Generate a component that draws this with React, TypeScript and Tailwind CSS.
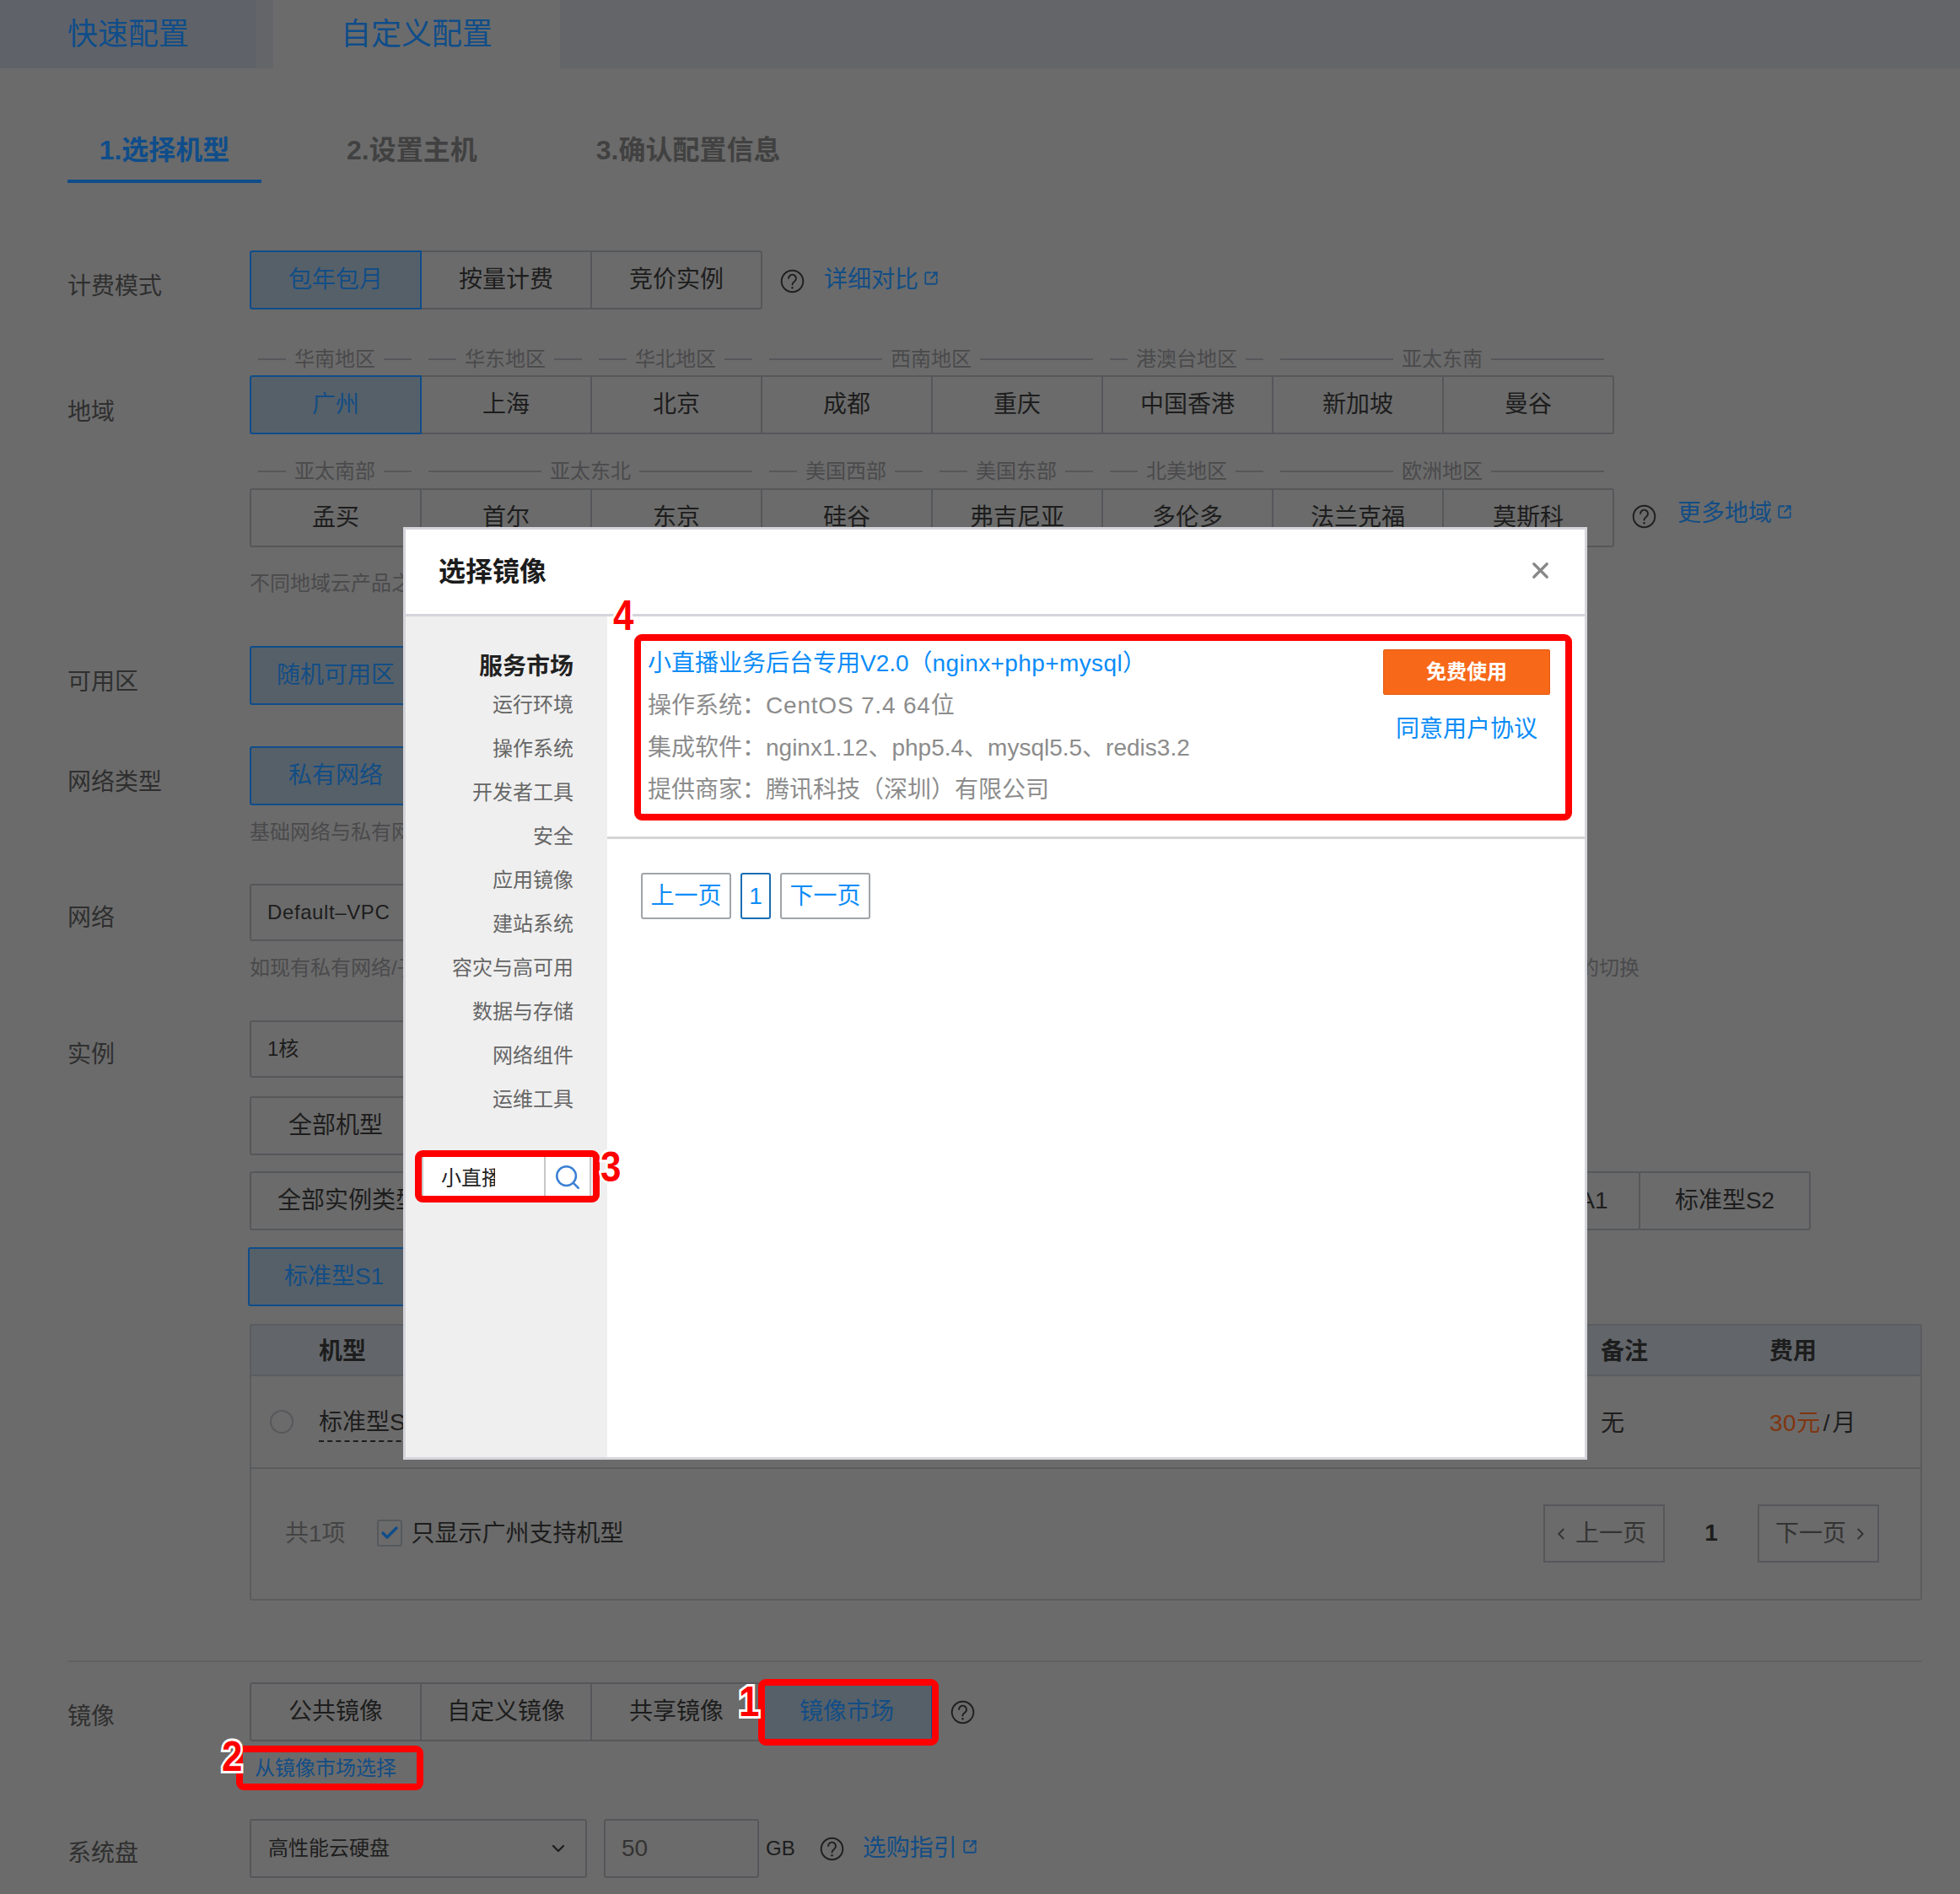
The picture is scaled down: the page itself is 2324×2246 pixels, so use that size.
import { Check, ChevronDown, ChevronLeft, ChevronRight, Search, SquareArrowOutUpRight, X } from 'lucide-react'

const cellBase = 'w-[204px] h-[70px] -ml-[2px] first:ml-0 flex items-center justify-center border-2 text-[28px] leading-none first:rounded-l-[3px] last:rounded-r-[3px]'

const BtnGroup = ({ items, active, cellClass = '' }: { items: string[], active?: string, cellClass?: string }) => (
  <div className="flex">
    {items.map((item) => (
      <div
        key={item}
        className={`${cellBase} ${cellClass} ${item === active ? 'relative z-10 bg-[#566069] border-[#0f4d8a] text-[#124d85]' : 'border-[#56575a] text-[#1d1d1d]'}`}
      >
        {item}
      </div>
    ))}
  </div>
)

const Label = ({ text, top = 23 }: { text: string, top?: number }) => (
  <div className={`w-[216px] shrink-0 text-[28px] leading-[40px] text-[#2f2f2f] ${top === 55 ? 'mt-[55px]' : top === 21 ? 'mt-[21px]' : 'mt-[23px]'}`}>{text}</div>
)

const Help = ({ className = '' }: { className?: string }) => (
  <svg viewBox="0 0 24 24" fill="none" stroke="currentColor" strokeWidth="1.6" strokeLinecap="round" className={`w-[29px] h-[29px] text-[#1f1f1f] shrink-0 ${className}`}>
    <circle cx="12" cy="12" r="10.6" />
    <path d="M8.3 9.2a3.7 3.7 0 1 1 5.9 3c-1.3.9-2.2 1.6-2.2 3.1" />
    <path d="M12 18.4v.1" strokeWidth="2" />
  </svg>
)

const ExtLink = ({ text }: { text: string }) => (
  <span className="flex items-center text-[28px] leading-[40px] text-[#124d85]">
    {text}
    <SquareArrowOutUpRight size={18} strokeWidth={2.4} className="ml-[6px] -mt-[4px]" />
  </span>
)

const regionHead = (groups: [string, number][]) => (
  <div className="grid grid-cols-8 w-[1616px] h-[24px]">
    {groups.map(([name, span]) => (
      <div key={name} className={`flex items-center gap-[10px] px-[10px] text-[24px] leading-none text-[#4a4a4c] ${span === 2 ? 'col-span-2' : ''}`}>
        <i className="flex-1 h-[2px] bg-[#56575a]" />
        {name}
        <i className="flex-1 h-[2px] bg-[#56575a]" />
      </div>
    ))}
  </div>
)

// red marker on top of the screenshot
const Mark = ({ className }: { className: string }) => (
  <div className={`absolute z-30 border-[8px] border-[#ff0000] rounded-[9px] ${className}`} />
)

const Num = ({ n, className }: { n: string, className: string }) => (
  <div className={`absolute z-40 origin-left scale-x-[0.88] font-bold text-[50px] leading-none text-[#ff0000] [-webkit-text-stroke:6px_white] [paint-order:stroke_fill] ${className}`}>{n}</div>
)

const sideItems = ['运行环境', '操作系统', '开发者工具', '安全', '应用镜像', '建站系统', '容灾与高可用', '数据与存储', '网络组件', '运维工具']

const ImageModal = () => (
  <div className="absolute z-20 left-[478px] top-[625px] w-[1404px] h-[1106px] bg-white border-[3px] border-[#d5d5dc] flex flex-col">
    <div className="h-[103px] shrink-0 border-b-[3px] border-[#d5d5dc] flex items-center justify-between pl-[39px] pr-[37px]">
      <span className="text-[32px] font-bold leading-none text-[#1c1c1c] -mt-[1px]">选择镜像</span>
      <X size={31} strokeWidth={2.5} className="text-[#888888] -mt-[3px]" />
    </div>
    <div className="flex flex-1 min-h-0">
      <div className="w-[239px] shrink-0 bg-[#efefef] pt-[41px] flex flex-col items-end">
        <div className="pr-[40px] text-[28px] font-bold leading-[38px] text-[#222222]">服务市场</div>
        {sideItems.map((s) => (
          <div key={s} className="pr-[40px] text-[24px] leading-[52px] text-[#666666]">{s}</div>
        ))}
        <div className="mt-[40px] mr-[19px] w-[201px] h-[51px] bg-white border-2 border-[#c8c8c8] flex">
          <div className="w-[145px] pl-[21px] pt-[2px] flex items-center border-r-2 border-[#c8c8c8]">
            <span className="w-[64px] overflow-hidden whitespace-nowrap text-[24px] leading-none text-[#222222]">小直播</span>
          </div>
          <div className="flex-1 flex items-center justify-center">
            <Search size={34} strokeWidth={1.8} className="text-[#3d80d4]" />
          </div>
        </div>
      </div>
      <div className="flex-1 min-w-0">
        <div className="h-[264px] border-b-[3px] border-[#d5d5d5] pl-[48px] pr-[41px] pt-[31px] flex justify-between">
          <div className="text-[28px] leading-[50px] text-[#8c8c8c]">
            <div className="text-[#0a8cf8]">小直播业务后台专用V2.0（<span className="tracking-[0.4px]">nginx+php+mysql</span>）</div>
            <div>操作系统：<span className="tracking-[0.8px]">CentOS 7.4 64</span>位</div>
            <div>集成软件：nginx1.12、php5.4、mysql5.5、redis3.2</div>
            <div>提供商家：腾讯科技（深圳）有限公司</div>
          </div>
          <div className="w-[198px] mt-[8px] flex flex-col items-center">
            <div className="w-full h-[54px] bg-[#f76819] border border-[#e05a12] rounded-[2px] flex items-center justify-center text-[24px] font-bold leading-none text-white">免费使用</div>
            <div className="mt-[21px] text-[28px] leading-[40px] text-[#0a8cf8]">同意用户协议</div>
          </div>
        </div>
        <div className="mt-[40px] ml-[40px] flex gap-[11px] text-[28px] leading-none text-[#0a8cf8]">
          <div className="w-[107px] h-[55px] border-2 border-[#a0a4a8] rounded-[3px] flex items-center justify-center">上一页</div>
          <div className="w-[36px] h-[55px] border-2 border-[#1a6db3] rounded-[3px] flex items-center justify-center">1</div>
          <div className="w-[107px] h-[55px] border-2 border-[#a0a4a8] rounded-[3px] flex items-center justify-center">下一页</div>
        </div>
      </div>
    </div>
  </div>
)

const App = () => {
  return (
    <div className="relative w-[2324px] h-[2246px] overflow-hidden bg-[#6b6b6b] font-['Liberation_Sans','Noto_Sans_CJK_SC',sans-serif]">
      {/* top tabs */}
      <div className="h-[81px] bg-[#636569] flex text-[36px] leading-none text-[#0f4d8a]">
        <div className="w-[304px] bg-[#5f6369] pl-[80px] flex items-center">快速配置</div>
        <div className="w-[340px] ml-[20px] bg-[#6b6b6b] flex items-center justify-center">自定义配置</div>
      </div>

      <div className="pl-[80px] pr-[45px]">
        {/* steps */}
        <div className="flex mt-[75px] text-[32px] font-bold leading-[44px] text-[#414141]">
          <div className="w-[230px] h-[61px] border-b-4 border-[#0f4d8a] text-center text-[#0f4d8a]">1.选择机型</div>
          <div className="ml-[101px]">2.设置主机</div>
          <div className="ml-[141px]">3.确认配置信息</div>
        </div>

        {/* billing */}
        <div className="flex mt-[80px]">
          <Label text="计费模式" />
          <BtnGroup items={['包年包月', '按量计费', '竞价实例']} active="包年包月" />
          <div className="flex items-center h-[70px] ml-[21px] gap-[23px]">
            <Help className="mt-[2px]" />
            <ExtLink text="详细对比" />
          </div>
        </div>

        {/* region */}
        <div className="flex mt-[47px]">
          <Label text="地域" top={55} />
          <div>
            {regionHead([['华南地区', 1], ['华东地区', 1], ['华北地区', 1], ['西南地区', 2], ['港澳台地区', 1], ['亚太东南', 2]])}
            <div className="mt-[7px]">
              <BtnGroup items={['广州', '上海', '北京', '成都', '重庆', '中国香港', '新加坡', '曼谷']} active="广州" />
            </div>
            <div className="mt-[32px]">
              {regionHead([['亚太南部', 1], ['亚太东北', 2], ['美国西部', 1], ['美国东部', 1], ['北美地区', 1], ['欧洲地区', 2]])}
            </div>
            <div className="mt-[8px] flex">
              <BtnGroup items={['孟买', '首尔', '东京', '硅谷', '弗吉尼亚', '多伦多', '法兰克福', '莫斯科']} />
              <div className="flex items-start ml-[21px] gap-[25px] mt-[19px]">
                <Help />
                <span className="-mt-[9px]"><ExtLink text="更多地域" /></span>
              </div>
            </div>
            <div className="mt-[31px] text-[24px] leading-[24px] text-[#4a4a4c]">不同地域云产品之间内网不互通</div>
          </div>
        </div>

        {/* zone */}
        <div className="flex mt-[62px]">
          <Label text="可用区" />
          <BtnGroup items={['随机可用区', '广州三区']} active="随机可用区" />
        </div>

        {/* network type */}
        <div className="flex mt-[49px]">
          <Label text="网络类型" />
          <div>
            <BtnGroup items={['私有网络', '基础网络']} active="私有网络" />
            <div className="mt-[20px] text-[24px] leading-[24px] text-[#4a4a4c]">基础网络与私有网络的差异</div>
          </div>
        </div>

        {/* network */}
        <div className="flex mt-[49px]">
          <Label text="网络" top={21} />
          <div>
            <div className="w-[400px] h-[68px] border-2 border-[#56575a] rounded-[3px] flex items-center pl-[19px] text-[24px] leading-none tracking-[0.6px] text-[#1d1d1d] whitespace-nowrap">
              Default–VPC<span className="ml-[17px]">(vpc-1)</span>
            </div>
            <div className="mt-[20px] w-[1648px] flex justify-between text-[24px] leading-[24px] text-[#4a4a4c]">
              <span>如现有私有网络/子网不符合您的要求</span>
              <span>的切换</span>
            </div>
          </div>
        </div>

        {/* instance */}
        <div className="flex mt-[50px]">
          <Label text="实例" top={21} />
          <div>
            <div className="w-[400px] h-[68px] border-2 border-[#56575a] rounded-[3px] flex items-center pl-[19px] text-[24px] leading-none text-[#1d1d1d]">1核</div>
            <div className="mt-[22px]">
              <BtnGroup items={['全部机型', '入门型']} />
            </div>
            <div className="mt-[19px] w-[1851px] flex justify-between">
              <BtnGroup items={['全部实例类型']} cellClass="!w-[234px]" />
              <div className="flex">
                <BtnGroup items={['标准型SA1']} cellClass="!w-[214px]" />
                <div className="-ml-[2px]"><BtnGroup items={['标准型S2']} /></div>
              </div>
            </div>
            <div className="mt-[20px] -ml-[2px]">
              <BtnGroup items={['标准型S1', '内存型M1']} active="标准型S1" />
            </div>

            {/* table */}
            <div className="mt-[21px] w-[1983px] h-[328px] border-2 border-[#5a5c5e] rounded-[3px]">
              <div className="h-[60px] pt-[4px] bg-[#62666a] border-b-2 border-[#5a5c5e] grid grid-cols-[80px_1520px_200px_1fr] items-center text-[28px] font-bold leading-none text-[#1d1d1d]">
                <span />
                <span>机型</span>
                <span>备注</span>
                <span>费用</span>
              </div>
              <div className="h-[110px] border-b-2 border-[#5a5c5e] grid grid-cols-[80px_1520px_200px_1fr] items-center text-[28px] leading-none text-[#1d1d1d]">
                <span className="pl-[22px]"><i className="block w-[28px] h-[28px] rounded-full border-2 border-[#57585b]" /></span>
                <span className="pt-[10px]"><span className="inline-block pb-[7px] border-b-2 border-dashed border-[#1d1d1d]">标准型S1</span></span>
                <span className="pt-[4px]">无</span>
                <span className="pt-[4px]"><span className="text-[#803510] tracking-[0.5px]">30元</span><span className="mx-[3px]">/</span>月</span>
              </div>
              <div className="h-[152px] flex items-center pl-[40px] pr-[49px] text-[28px] leading-none">
                <span className="pt-[2px] text-[#444444]">共1项</span>
                <span className="ml-[37px] w-[30px] h-[32px] border-2 border-[#56595c] rounded-[3px] flex items-center justify-center">
                  <Check size={24} strokeWidth={3.4} className="text-[#0f4d8a]" />
                </span>
                <span className="ml-[11px] pt-[2px] text-[#1d1d1d]">只显示广州支持机型</span>
                <div className="ml-auto flex items-center text-[#333333]">
                  <span className="w-[144px] h-[69px] pr-[12px] pt-[2px] border-2 border-[#56575a] flex items-center justify-center gap-[6px]">
                    <ChevronLeft size={22} strokeWidth={2} />上一页
                  </span>
                  <span className="w-[110px] text-center font-bold text-[#1d1d1d]">1</span>
                  <span className="w-[144px] h-[69px] pl-[10px] pt-[2px] border-2 border-[#56575a] flex items-center justify-center gap-[6px]">
                    下一页<ChevronRight size={22} strokeWidth={2} />
                  </span>
                </div>
              </div>
            </div>
          </div>
        </div>

        <div className="mt-[71px] h-[2px] bg-[#606163]" />

        {/* image */}
        <div className="flex mt-[24px]">
          <Label text="镜像" top={21} />
          <div>
            <div className="flex items-center">
              <BtnGroup items={['公共镜像', '自定义镜像', '共享镜像', '镜像市场']} active="镜像市场" />
              <Help className="ml-[21px]" />
            </div>
            <div className="mt-[20px] ml-[6px] text-[24px] leading-[24px] text-[#124d85]">从镜像市场选择</div>
          </div>
        </div>

        {/* system disk */}
        <div className="flex mt-[48px]">
          <Label text="系统盘" top={21} />
          <div className="flex items-center h-[70px]">
            <div className="w-[400px] h-full border-2 border-[#56575a] rounded-[3px] flex items-center justify-between pl-[20px] pr-[20px] text-[24px] leading-none text-[#1d1d1d]">
              高性能云硬盘
              <ChevronDown size={24} strokeWidth={2.2} />
            </div>
            <div className="ml-[20px] w-[184px] h-full border-2 border-[#56575a] rounded-[3px] flex items-center pl-[19px] text-[28px] leading-none text-[#333333]">50</div>
            <span className="ml-[8px] text-[24px] leading-none text-[#1d1d1d]">GB</span>
            <Help className="ml-[29px]" />
            <span className="ml-[22px]"><ExtLink text="选购指引" /></span>
          </div>
        </div>
      </div>

      <ImageModal />

      {/* step annotations */}
      <Mark className="left-[752px] top-[752px] w-[1112px] h-[221px]" />
      <Mark className="left-[492px] top-[1364px] w-[219px] h-[62px]" />
      <Mark className="left-[899px] top-[1991px] w-[214px] h-[79px]" />
      <Mark className="left-[280px] top-[2070px] w-[222px] h-[53px]" />
      <Num n="4" className="left-[727px] top-[705px]" />
      <Num n="3" className="left-[712px] top-[1359px]" />
      <Num n="1" className="left-[876px] top-[1993px]" />
      <Num n="2" className="left-[263px] top-[2058px]" />
    </div>
  )
}

export default App
